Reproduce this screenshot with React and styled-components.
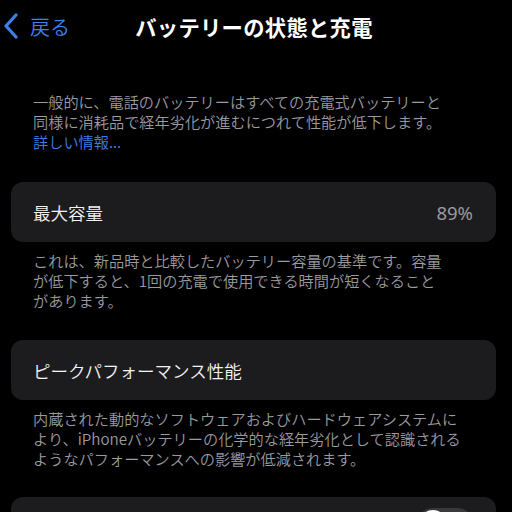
import React from 'react';
import styled, { createGlobalStyle } from 'styled-components';

const Global = createGlobalStyle`
  html, body {
    margin: 0;
    padding: 0;
    background: #000;
  }
  body {
    font-family: 'Noto Sans CJK JP', 'Noto Sans', sans-serif;
    -webkit-font-smoothing: antialiased;
  }
`;

const Screen = styled.div`
  width: 512px;
  height: 512px;
  overflow: hidden;
  background: #000;
  color: #fff;
`;

const NavBar = styled.div`
  height: 52px;
  display: grid;
  grid-template-columns: 1fr auto 1fr;
  align-items: center;
`;

const Back = styled.div`
  display: flex;
  align-items: center;
  gap: 11px;
  padding-left: 3px;
  color: #3b82f0;
  font-size: 20px;
  font-weight: 350;
`;

const Title = styled.div`
  font-size: 21.3px;
  font-weight: 600;
  color: #fff;
  letter-spacing: 0.3px;
  margin-left: -4px;
`;

const Note = styled.p`
  margin: ${p => p.$top}px 0 0;
  padding: 0 20px 0 33px;
  font-size: 15.2px;
  font-weight: 350;
  line-height: 20px;
  color: #9a9aa0;
  white-space: nowrap;
`;

const Link = styled.span`
  color: #3b7fe6;
`;

const Card = styled.div`
  margin: ${p => p.$top}px 16px 0 11px;
  height: ${p => p.$h || 60}px;
  border-radius: 12px;
  background: #1c1c1e;
  display: flex;
  align-items: center;
  justify-content: space-between;
  padding: 0 23px 0 22px;
  box-sizing: border-box;
`;

const Label = styled.span`
  font-size: 17.5px;
  font-weight: 350;
  color: #f2f2f2;
`;

const Value = styled.span`
  font-family: 'Noto Sans', 'Liberation Sans', sans-serif;
  font-size: 18.5px;
  color: #9a9a9f;
`;

const Toggle = styled.div`
  align-self: flex-start;
  margin-left: auto;
  margin-top: 11px;
  width: 56px;
  height: 32px;
  border-radius: 16px;
  background: #39393d;
  position: relative;
  &::after {
    content: '';
    position: absolute;
    left: 2px;
    top: 2px;
    width: 28px;
    height: 28px;
    border-radius: 50%;
    background: #fff;
  }
`;

export default function App() {
  return (
    <Screen>
      <Global />
      <NavBar>
        <Back>
          <svg width="16" height="26" viewBox="0 0 16 26" fill="none">
            <path d="M13 2 L3 13 L13 24" stroke="#3b82f0" strokeWidth="3.2" strokeLinecap="round" strokeLinejoin="round" />
          </svg>
          <span>戻る</span>
        </Back>
        <Title>バッテリーの状態と充電</Title>
        <div />
      </NavBar>

      <Note $top={39}>
        一般的に、電話のバッテリーはすべての充電式バッテリーと<br />
        同様に消耗品で経年劣化が進むにつれて性能が低下します。<br />
        <Link>詳しい情報...</Link>
      </Note>

      <Card $top={31}>
        <Label>最大容量</Label>
        <Value>89%</Value>
      </Card>
      <Note $top={8}>
        これは、新品時と比較したバッテリー容量の基準です。容量<br />
        が低下すると、1回の充電で使用できる時間が短くなること<br />
        があります。
      </Note>

      <Card $top={30}>
        <Label>ピークパフォーマンス性能</Label>
      </Card>
      <Note $top={8}>
        内蔵された動的なソフトウェアおよびハードウェアシステムに<br />
        より、iPhoneバッテリーの化学的な経年劣化として認識される<br />
        ようなパフォーマンスへの影響が低減されます。
      </Note>

      <Card $top={29} $h={52}>
        <Toggle />
      </Card>
    </Screen>
  );
}
